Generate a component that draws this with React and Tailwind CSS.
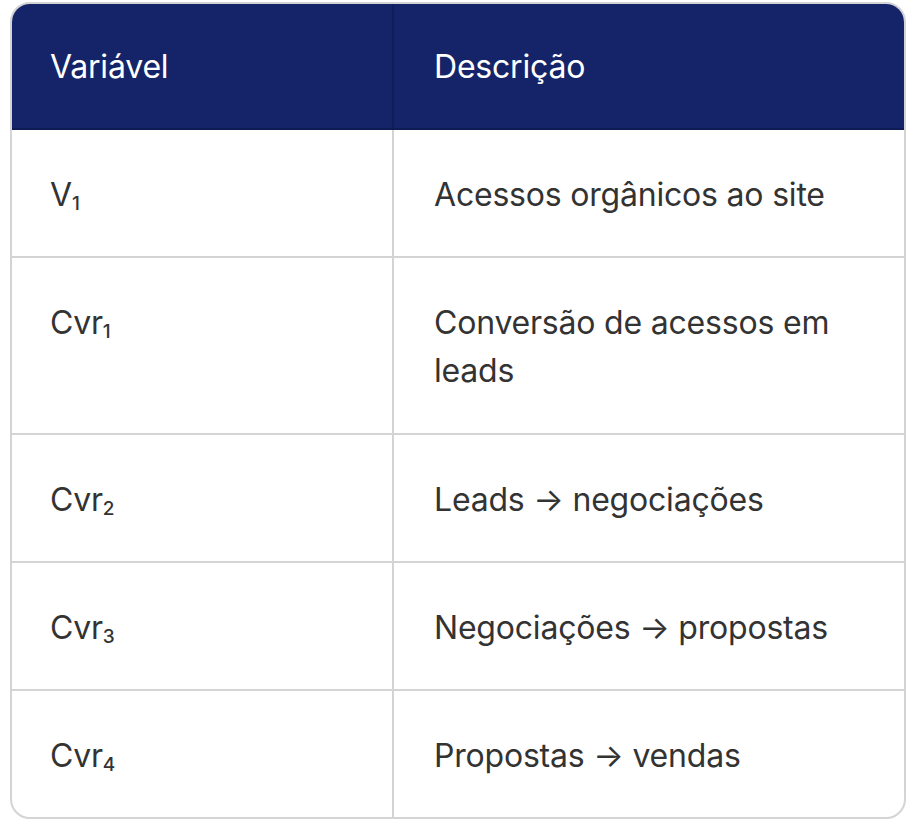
export default function App() {
  const rows = [
    ["V", "1", "Acessos orgânicos ao site"],
    ["Cvr", "1", "Conversão de acessos em leads"],
    ["Cvr", "2", "Leads → negociações"],
    ["Cvr", "3", "Negociações → propostas"],
    ["Cvr", "4", "Propostas → vendas"],
  ];
  return (
    <div className="w-[916px] h-[824px] bg-white pt-[2px] pl-[10px]" style={{ fontFamily: "Inter, 'Noto Sans', sans-serif" }}>
      <div className="w-[896px] rounded-[20px] border-2 border-[#d4d4d4] overflow-hidden text-[32px] leading-[48px] tracking-[-0.2px]">
        <div className="grid grid-cols-[384px_1fr] bg-[#152468] text-white border-b-2 border-[#0f1b55] -mx-[2px] -mt-[2px]">
          <div className="pl-[40px] pr-10 pt-[41px] pb-[37px] border-r-2 border-[#101d58]">Variável</div>
          <div className="pl-10 pr-10 pt-[41px] pb-[37px]">Descrição</div>
        </div>
        {rows.map(([v, s, d], i) => (
          <div key={i} className={`grid grid-cols-[382px_1fr] text-[#333333] ${i > 0 ? "border-t-2 border-[#d4d4d4]" : ""}`}>
            <div className={`pl-[38px] pr-10 pt-[41px] ${i === 1 ? "pb-[38px]" : "pb-[37px]"} border-r-2 border-[#d4d4d4]`}>
              {v}
              <sub className="text-[19px] font-medium leading-none align-baseline relative top-[4px]">{s}</sub>
            </div>
            <div className={`pl-10 pr-10 pt-[41px] ${i === 1 ? "pb-[38px]" : "pb-[37px]"}`}>{d}</div>
          </div>
        ))}
      </div>
    </div>
  );
}
